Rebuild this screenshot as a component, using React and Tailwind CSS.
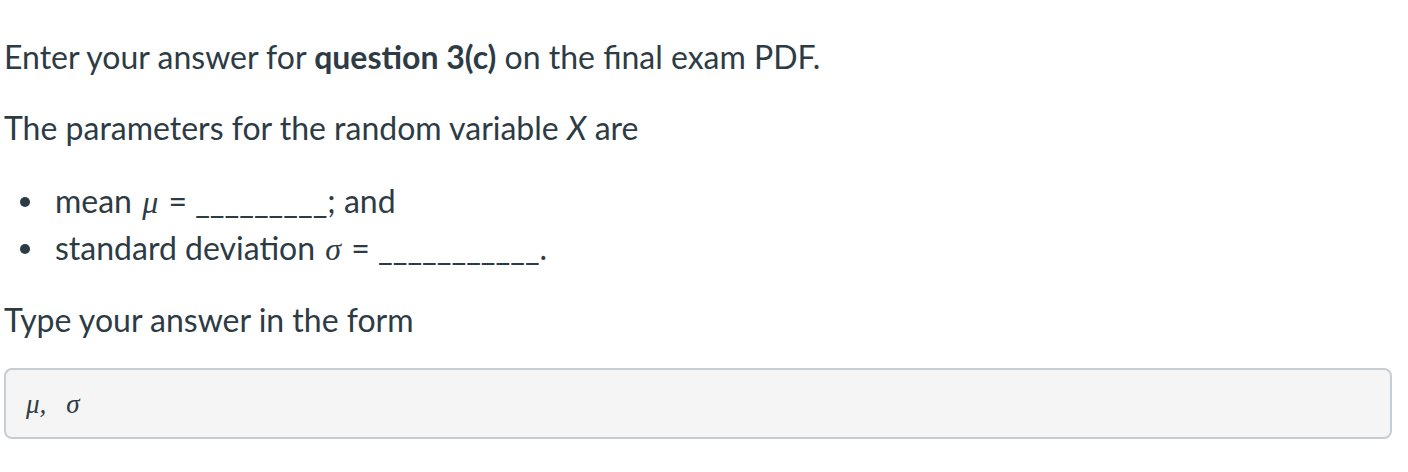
import React from 'react';

const Mi = ({ children }) => (
  <span className="font-['Liberation_Serif',serif] italic text-[32px] mx-[2px]">{children}</span>
);

export default function App() {
  return (
    <div className="bg-white min-h-[472px] pt-[36px] pl-[4px] w-[1392px] font-['Lato',sans-serif] text-[32px] leading-[42px] text-[#2d3b45]">
      <p>
        Enter your answer for <strong className="font-bold">question 3(c)</strong> on the final exam PDF.
      </p>
      <p className="mt-[29px]">
        The parameters for the random variable <span className="italic">X</span> are
      </p>

      <ul className="pl-[51px] mt-[29px] mb-[27px] leading-[46px]">
        <li className="relative">
          <span className="absolute left-[-35px] top-[19px] w-[10px] h-[10px] rounded-full bg-[#2d3b45]" />
          mean <Mi>μ</Mi> = _________; and
        </li>
        <li className="relative">
          <span className="absolute left-[-35px] top-[19px] w-[10px] h-[10px] rounded-full bg-[#2d3b45]" />
          standard deviation <Mi>σ</Mi> = ___________.
        </li>
      </ul>

      <p>Type your answer in the form</p>

      <div className="mt-[27px] h-[71px] w-[1388px] rounded-lg border-2 border-[#c7cdd1] bg-[#f5f5f5] flex items-center pl-[20px]">
        <span className="font-['Liberation_Serif',serif] italic text-[27px] text-[#2d3b45] flex gap-[20px]">
          <span>μ,</span>
          <span>σ</span>
        </span>
      </div>
    </div>
  );
}
